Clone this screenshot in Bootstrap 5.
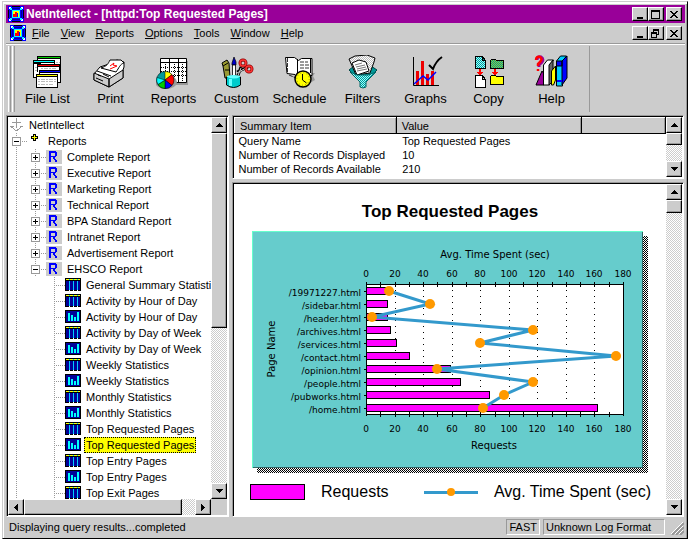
<!DOCTYPE html>
<html lang="en">
<head>
<meta charset="utf-8">
<meta name="viewport" content="width=device-width, initial-scale=1">
<title>NetIntellect - [httpd:Top Requested Pages]</title>
<link href="https://cdn.jsdelivr.net/npm/bootstrap@5.3.0/dist/css/bootstrap.min.css" rel="stylesheet">
<style>
:root{--face:#ccc;--shade:#999}
body{font:11px/16px "Liberation Sans",Arial,sans-serif;color:#000;background:#fff;padding:1px 0 1px 2px}
.app-window{height:calc(100vh - 2px);background:var(--face);border:1px solid var(--face);border-right-color:#000;border-bottom-color:#000;box-shadow:inset 0 2px #fff,inset 1px 0 #fff,inset -1px 0 var(--shade);padding:3px 2px 0 3px}
a{color:#000;text-decoration:none}
svg{display:block;flex:none}
button{padding:0;color:#000}
.title-strip{background:#909;color:#fff;height:18px;padding:0 3px 0 2px}
.title-strip h1{font:bold 12px/18px "Liberation Sans",Arial,sans-serif;margin:0 0 0 2px}
.menu-strip{height:20px;padding:0 3px 0 4px}
.menu-strip .nav{gap:11px;margin-left:6px}
.menu-strip .nav-link{padding:0;color:#000;line-height:18px}
.raised{background:var(--face);border:1px solid;border-color:#fff #000 #000 #fff;border-radius:0;box-shadow:inset -1px -1px var(--shade)}
.win-btn{width:16px;height:14px;display:flex;align-items:center;justify-content:center}
.close-btn{margin-left:2px}
.tool-strip{border-top:1px solid var(--shade);box-shadow:inset 0 1px #fff;height:69px;padding:2px 0 0 2px}
.grip{width:3px;border-left:1px solid #fff;border-right:1px solid var(--shade);margin-right:1px}
.tool-set{border-right:1px solid var(--shade);padding-right:6px}
.tool-btn{width:63px;border:0;background:none;font-size:13px;line-height:16px;padding:4px 0 0}
.tool-btn svg{margin:0 auto 2px}
.sunken{border:1px solid;border-color:var(--shade) #fff #fff var(--shade);background:#fff;box-shadow:inset 1px 1px #000;padding:1px;min-height:0}
.work{gap:3px;padding:3px 1px 0 0}
.tree-pane{width:223px;flex:none}
.summary-pane{height:64px}
.right-side{gap:3px}
.vscroll{width:16px;flex:none}
.vscroll>button,.hscroll>button{width:16px;height:16px;flex:none;display:flex;align-items:center;justify-content:center}
.track{background:repeating-conic-gradient(#fff 0 25%,#ccc 0 50%) 0 0/2px 2px}
.thumb{flex:none}
.tree{list-style:none;margin:0;padding:0;white-space:nowrap}
.tree li{display:flex;height:16px}
.tree a{margin-left:3px;padding:0 2px}
.tree a.picked{background:#ff0;outline:1px dotted #000;outline-offset:-1px}
.tree i{width:19px;flex:none;background-repeat:no-repeat;background-position:8px 0,8px 8px;background-size:1px 16px,11px 1px;padding:4px 0 0 4px}
.v,.t{background-image:repeating-linear-gradient(#999 0 1px,#fff 1px 2px)}
.t{background-image:repeating-linear-gradient(#999 0 1px,#fff 1px 2px),repeating-linear-gradient(90deg,#999 0 1px,#fff 1px 2px)}
.fold{display:block;width:9px;height:9px;border:1px solid var(--shade);background:linear-gradient(#000,#000) center/5px 1px no-repeat #fff}
.fold.plus{background:linear-gradient(#000,#000) center/5px 1px no-repeat,linear-gradient(#000,#000) center/1px 5px no-repeat #fff}
.summary{width:100%;line-height:14px;margin:0;table-layout:fixed}
.summary th{font-weight:400;height:16px;padding:0 5px;background:var(--face);border:1px solid;border-color:#fff #000 #000 #fff;box-shadow:inset -1px 0 var(--shade)}
.summary td{padding:0 4px}
.summary td+td{padding-left:6px}
.chart-title{font:bold 17px/20px "Liberation Sans",Arial,sans-serif;margin:18px 0 8px;text-align:center}
.plot{width:100%;height:auto;font-family:"DejaVu Sans",Verdana,sans-serif}
.legend-row{font-size:16px;line-height:20px;padding:6px 15px 0 16px}
.status-strip{height:21px;padding:2px 1px 3px 3px;gap:3px}
.status-box{border:1px solid;border-color:var(--shade) #fff #fff var(--shade);line-height:14px;padding:0 2px}
.fmt-box{width:122px}
.size-grip{margin-left:3px}
</style>
<script src="https://cdn.jsdelivr.net/npm/bootstrap@5.3.0/dist/js/bootstrap.bundle.min.js"></script>
</head>
<body>
<svg width="0" height="0" class="position-absolute" aria-hidden="true" shape-rendering="crispEdges">
<symbol id="app" viewBox="0 0 16 16"><path d="M0 0h16v16H0z"/><path fill="#00f" d="M0 0h4v1h8V0h4v4h-1v8h1v4h-4v-1H4v1H0v-4h1V4H0z"/><path fill="#009" d="M4 2h8v1H4zM4 13h8v1H4zM2 4h1v8H2zM13 4h1v8h-1z"/><path fill="#fff" d="M1 1h2v1H2v1H1zM13 1h2v2h-1V2h-1zM1 13h1v1h1v1H1zM14 13h1v2h-2v-1h1z"/><path fill="#0ff" d="M2 2h2v2H2zM12 2h2v2h-2zM2 12h2v2H2zM12 12h2v2h-2zM4 4h8v8H4z"/><path fill="#ff0" d="M5 5h6v6H5z"/><path fill="#f00" d="M5 8h2v3H5zM7 6h2v5H7z"/><path fill="#00f" d="M9 7h1v4H9z"/></symbol>
<symbol id="r" viewBox="0 0 16 16"><path fill="#ccc" d="M0 1h16v14H0z"/><path fill="#00f" d="M3 2h7v1h1v4h-1v1H9v2h1v1h1v2H9v-2H8v-1H7V8H5v5H3zM5 4v3h4V4z"/></symbol>
<symbol id="tb" viewBox="0 0 16 16"><path d="M0 1h16v3H0z"/><path fill="#ff0" d="M1 2h14v1H1z"/><path fill="#0cf" d="M4 2h1v1H4zM8 2h1v1H8zM12 2h1v1h-1zM1 4h14v9H1z"/><path fill="#009" d="M1 4h3v9H1zM5 4h3v9H5zM9 4h3v9H9zM13 4h2v9h-2z"/><path d="M0 4h1v9H0zM15 4h1v9h-1zM0 13h4v1H0zM5 13h3v1H5zM9 13h3v1H9zM13 13h3v1h-3z"/></symbol>
<symbol id="ch" viewBox="0 0 16 16"><path d="M0 1h16v13H0z"/><path fill="#009" d="M1 2h14v11H1z"/><path fill="#0ff" d="M3 4h2v8H3zM6 6h2v6H6zM9 8h2v4H9zM12 3h2v9h-2z"/></symbol>
<symbol id="up" viewBox="0 0 7 4"><path d="M3 0h1v1h1v1h1v1h1v1H0V3h1V2h1V1h1z"/></symbol>
<symbol id="dn" viewBox="0 0 7 4"><path d="M0 0h7v1H6v1H5v1H4v1H3V3H2V2H1V1H0z"/></symbol>
<symbol id="lf" viewBox="0 0 4 7"><path d="M4 0v7H3V6H2V5H1V4H0V3h1V2h1V1h1V0z"/></symbol>
<symbol id="rt" viewBox="0 0 4 7"><path d="M0 0v7h1V6h1V5h1V4h1V3H3V2H2V1H1V0z"/></symbol>
<symbol id="mn" viewBox="0 0 10 9"><path d="M2 7h6v2H2z"/></symbol>
<symbol id="mx" viewBox="0 0 10 9"><path fill-rule="evenodd" d="M0 0h9v9H0zM1 2v6h7V2z"/></symbol>
<symbol id="rs" viewBox="0 0 10 9"><path fill-rule="evenodd" d="M2 0h6v6H6v3H0V3h2zM3 2v1h3v2h1V2zM1 5v3h4V5z"/></symbol>
<symbol id="cl" viewBox="0 0 10 9"><path d="M1 1h2v1h1v1h2V2h1V1h2v1H8v1H7v1H6v1h1v1h1v1h1v1H7V7H6V6H4v1H3v1H1V7h1V6h1V5h1V4H3V3H2V2H1z"/></symbol>
<pattern id="chk" width="2" height="2" patternUnits="userSpaceOnUse"><path fill="#fff" d="M0 0h2v2H0z"/><path d="M0 0h1v1H0zM1 1h1v1H1z"/></pattern>
<pattern id="tealchk" width="2" height="2" patternUnits="userSpaceOnUse"><path fill="#9ff" d="M0 0h2v2H0z"/><path fill="#099" d="M0 0h1v1H0zM1 1h1v1H1z"/></pattern>
<pattern id="olivechk" width="2" height="2" patternUnits="userSpaceOnUse"><path fill="#9c3" d="M0 0h2v2H0z"/><path fill="#099" d="M0 0h1v1H0zM1 1h1v1H1z"/></pattern>
<pattern id="greychk" width="2" height="2" patternUnits="userSpaceOnUse"><path fill="#fff" d="M0 0h2v2H0z"/><path fill="#bbb" d="M0 0h1v1H0zM1 1h1v1H1z"/></pattern>
</svg>

<div class="app-window d-flex flex-column overflow-hidden">
<header>
<div class="title-strip d-flex align-items-center">
<svg width="16" height="16"><use href="#app"/></svg>
<h1 class="flex-grow-1 text-truncate">NetIntellect - [httpd:Top Requested Pages]</h1>
<button class="raised win-btn" aria-label="Minimize"><svg width="10" height="9"><use href="#mn"/></svg></button>
<button class="raised win-btn" aria-label="Maximize"><svg width="10" height="9"><use href="#mx"/></svg></button>
<button class="raised win-btn close-btn" aria-label="Close"><svg width="10" height="9"><use href="#cl"/></svg></button>
</div>
<nav class="menu-strip d-flex align-items-center" aria-label="Menu">
<svg width="16" height="16"><use href="#app"/></svg>
<div class="nav flex-grow-1 flex-nowrap"><a class="nav-link" href="#"><u>F</u>ile</a><a class="nav-link" href="#"><u>V</u>iew</a><a class="nav-link" href="#"><u>R</u>eports</a><a class="nav-link" href="#"><u>O</u>ptions</a><a class="nav-link" href="#"><u>T</u>ools</a><a class="nav-link" href="#"><u>W</u>indow</a><a class="nav-link" href="#"><u>H</u>elp</a></div>
<button class="raised win-btn" aria-label="Minimize document"><svg width="10" height="9"><use href="#mn"/></svg></button>
<button class="raised win-btn" aria-label="Restore document"><svg width="10" height="9"><use href="#rs"/></svg></button>
<button class="raised win-btn close-btn" aria-label="Close document"><svg width="10" height="9"><use href="#cl"/></svg></button>
</nav>
<div class="tool-strip d-flex">
<div class="grip"></div><div class="grip"></div>
<div class="tool-set d-flex" role="toolbar">
<button class="tool-btn"><svg width="35" height="34" viewBox="30 55 35 34" shape-rendering="crispEdges"><path d="M37 56h24v14H37z"/><path fill="#fff" d="M38 59h22v10H38z"/><path fill="#0c0" d="M38 57h22v1H38z"/><path d="M33 60h22v10H33z"/><path fill="#fff" d="M34 63h20v6H34z"/><path fill="#0ff" d="M34 61h20v1H34z"/><path fill="#fff" stroke="#000" d="M33.500 63v14.500H40V63z"/><path d="M37 64h23v8H37z"/><path fill="#fff" d="M38 67h21v5H38z"/><path fill="#f00" d="M38 65h21v1H38z"/><path d="M39 70h22v13H39z"/><path fill="#fff" d="M40 73h20v9H40z"/><path fill="#00f" d="M40 71h20v1H40z"/><path d="M36 74h22v14H36z"/><path fill="#fff" d="M37 77h20v10H37z"/><path fill="#ff0" d="M37 75h20v1H37z"/><path stroke="#bbb" stroke-dasharray="2 1 4 1" d="M38 79.500h18M38 81.500h18M38 84.500h15M35 67.500h2M35 70.500h2M56 62.500h4M41 68.500h16"/></svg>File List</button>
<button class="tool-btn"><svg width="35" height="34" viewBox="93 55 35 34"><path fill="#fff" stroke="#000" d="M94 74l6-7 9-3 8-4 7 2v5l-1 3v8l-14 9-15-7z"/><path fill="#ccc" stroke="#000" d="M94 73l15 6v8l-15-7zM109 79l14-9v8l-14 9z"/><path fill="#fff" stroke="#000" d="M101 68c6-2 7-4 9-8h11l3 3c-4 1-5 5-8 9z"/><path fill="none" stroke="#f00" d="M110 66l4-3-1 2 4 1-7 3"/><path fill="none" stroke="#000" d="M97 71l14 5M98 75l3 1M103 74l6 3M96 78l7 3"/></svg>Print</button>
<button class="tool-btn"><svg width="35" height="34" viewBox="156 55 35 34"><path fill="#999" d="M162 61h26v24h-26z"/><path fill="#fff" stroke="#000" d="M160.500 58.500h26v24h-26z"/><path d="M160.500 62.500h26M169.500 58v24M178.500 58v24" stroke="#000"/><path d="M161 67.500h25M161 71.500h25M161 75.500h25M165.500 64v18M174.500 64v18M182.500 64v18" stroke="#000" stroke-dasharray="1 1"/><ellipse cx="166" cy="82" rx="11" ry="7" fill="#999"/><g stroke="#000" stroke-width=".5"><circle cx="165" cy="80" r="8.500" fill="#099"/><path fill="#ff0" d="M165 80v-8.500a8.500 8.500 0 0 1 7 3z"/><path fill="#f00" d="M165 80l7-5.500a8.500 8.500 0 0 1 0 11z"/><path fill="#00f" d="M165 80l7 5.500a8.500 8.500 0 0 1-7 3z"/><path fill="#0c0" d="M165 80v8.500a8.500 8.500 0 0 1-7-4z"/><path fill="#0ff" d="M165 80l-7 4.500a8.500 8.500 0 0 1-1-7z"/></g></svg>Reports</button>
<button class="tool-btn"><svg width="35" height="34" viewBox="219 55 35 34"><path fill="#999933" stroke="#000" d="M222 63l5-3 2 3 1 15h-5l-2-12z"/><path stroke="#000" d="M223 66l5-3M225 70h4"/><path fill="#00c" stroke="#000" stroke-width=".7" d="M232 63l2-6 2 5v3h-4z"/><path fill="#fff" stroke="#000" stroke-width=".8" d="M232.500 65h3v12h-3z"/><path stroke="#000" stroke-width="3" d="M248 67l-11 5M241 67l-4 11"/><path stroke="#ccc" stroke-width="1" d="M246 68l-9 5M241 68l-4 10"/><g fill="none" stroke="#800" stroke-width="3"><circle cx="243" cy="63" r="3"/><circle cx="249" cy="69" r="3"/></g><g fill="none" stroke="#f33" stroke-width="1.500"><circle cx="243" cy="63" r="3"/><circle cx="249" cy="69" r="3"/></g><path fill="#0cc" stroke="#000" d="M226.500 77q7-3 14 0v8q-7 5-14 0z"/><path fill="#6ff" d="M227 77q7 3 13 0v-1q-7-2-13 0zM229 79h3v7h-3z"/></svg>Custom</button>
<button class="tool-btn"><svg width="35" height="34" viewBox="282 55 35 34"><path fill="#999" d="M306 73h9l-2 3 2 4-7 4z"/><path fill="#fff" stroke="#000" d="M285.500 57.500h9l4 3 3-2h10.500v17h-11l-3 2-3-3-8-1z"/><path stroke="#000" d="M297.500 59v17M310.500 59v14"/><path stroke="#000" stroke-width=".8" d="M287.500 58v15M300 62h8M300 65h9M300 68h9M289 75l7 3" stroke-dasharray="4 1"/><circle cx="303" cy="79" r="8" fill="#ff0" stroke="#000" stroke-width="1.500"/><circle cx="303" cy="79" r="6.200" fill="none" stroke="#990" stroke-dasharray="1 2.200"/><path fill="none" stroke="#000" d="M302.500 74v6l4 3"/></svg>Schedule</button>
<button class="tool-btn"><svg width="35" height="34" viewBox="345 55 35 34"><path fill="#099" stroke="#044" d="M349 70l5-4h17l6 4-5 5-9 4-9-4z"/><path fill="url(#greychk)" stroke="#000" d="M349 59l6-3 12-1 8 3-1 4-4 11-14 2z"/><path fill="#fff" stroke="#000" d="M352 63l7-3 7 2 3 9-12 4z"/><path stroke="#555" stroke-width=".8" d="M355 65l7-2M356 67l9-2M357 69l9-2M357 71l10-2"/><path fill="url(#tealchk)" stroke="#066" d="M350 72l7 3h11l8-3-10 10v5l-3 1-3-1v-5z"/></svg>Filters</button>
<button class="tool-btn"><svg width="35" height="34" viewBox="408 55 35 34"><path fill="#e00" d="M416 71h3v14h-3zM421 61h3v24h-3zM426 74h3v11h-3zM431 71h3v14h-3z"/><path fill="none" stroke="#000" d="M413.500 57v28.500H439"/><path fill="none" stroke="#00f" stroke-width="1.500" d="M414 84l9-8 5 4 8-8"/><path fill="none" stroke="#000" stroke-width="2" d="M429 65l4 4q3-8 9-12"/></svg>Graphs</button>
<button class="tool-btn"><svg width="35" height="34" viewBox="471 55 35 34" shape-rendering="crispEdges"><path fill="url(#tealchk)" stroke="#000" d="M475.500 56.500h7l3 4v8h-10z"/><path fill="#fff" stroke="#000" d="M475.500 75.500h7l3 4v8h-10zM482.500 75.500v4h3"/><path stroke="#000" fill="none" d="M482.500 56.500v4h3"/><path fill="url(#olivechk)" stroke="#000" d="M490.500 60.500l1-1h4l1 1h7v8h-13z"/><path fill="#ff0" stroke="#000" d="M490.500 76.500l1-1h4l1 1h7v8h-13z"/><path fill="#f00" d="M479 69h2v3h3l-4 3-4-3h3zM494 69h2v3h3l-4 3-4-3h3z"/></svg>Copy</button>
<button class="tool-btn"><svg width="35" height="34" viewBox="534 55 35 34"><path fill="none" stroke="#909" stroke-width="3" d="M537 60q0-4 4-3 3 2 1 5l-3 3v2"/><path fill="none" stroke="#f00" stroke-width="2.500" d="M536 60q0-4 4-3 3 2 0 5l-2 2v2M538 69v2"/><path fill="#909" stroke="#000" d="M536 85l6-14 2 3v11z"/><path fill="#fff" stroke="#000" d="M543.500 65l4-5h6l-4 5v20h-6z"/><path fill="#666" stroke="#000" d="M549 65l4-5v21l-4 4z"/><path fill="#ff0" stroke="#000" d="M551.500 71l4-5v14l-2 5h-2z"/><path fill="#0cf" stroke="#000" d="M556.500 61l4-5h6l-4 5v25h-6z"/><path fill="#00f" stroke="#000" d="M562 61l5-5v22l-5 7zM556.500 61h5.500v5h-5.500z"/><path stroke="#00f" stroke-width="2" d="M557 81h5"/></svg>Help</button>
</div>
</div>
</header>

<main class="work d-flex flex-grow-1 overflow-hidden">
<section class="sunken tree-pane d-flex flex-column" aria-label="Reports">
<div class="d-flex flex-grow-1 overflow-hidden">
<ul class="tree flex-grow-1 overflow-hidden">
<li><svg width="16" height="16" fill="none" stroke="#999" shape-rendering="crispEdges"><path d="M8.500 1v10M4 5.500h9M8.500 14l-6-5h3M8.500 14l6-5h-3"/></svg><a href="#">NetIntellect</a></li>
<li><i class="t"><button class="fold" aria-label="Collapse"></button></i><svg width="16" height="16" shape-rendering="crispEdges"><path d="M6 1h3v2h2v3H9v2H6V6H4V3h2z"/><path fill="#ff0" d="M7 2h1v2h2v1H8v2H7V5H5V4h2z"/></svg><a href="#">Reports</a></li>
<li><i class="v"></i><i class="t"><button class="fold plus" aria-label="Expand"></button></i><svg width="16" height="16"><use href="#r"/></svg><a href="#">Complete Report</a></li>
<li><i class="v"></i><i class="t"><button class="fold plus" aria-label="Expand"></button></i><svg width="16" height="16"><use href="#r"/></svg><a href="#">Executive Report</a></li>
<li><i class="v"></i><i class="t"><button class="fold plus" aria-label="Expand"></button></i><svg width="16" height="16"><use href="#r"/></svg><a href="#">Marketing Report</a></li>
<li><i class="v"></i><i class="t"><button class="fold plus" aria-label="Expand"></button></i><svg width="16" height="16"><use href="#r"/></svg><a href="#">Technical Report</a></li>
<li><i class="v"></i><i class="t"><button class="fold plus" aria-label="Expand"></button></i><svg width="16" height="16"><use href="#r"/></svg><a href="#">BPA Standard Report</a></li>
<li><i class="v"></i><i class="t"><button class="fold plus" aria-label="Expand"></button></i><svg width="16" height="16"><use href="#r"/></svg><a href="#">Intranet Report</a></li>
<li><i class="v"></i><i class="t"><button class="fold plus" aria-label="Expand"></button></i><svg width="16" height="16"><use href="#r"/></svg><a href="#">Advertisement Report</a></li>
<li><i class="v"></i><i class="t"><button class="fold" aria-label="Collapse"></button></i><svg width="16" height="16"><use href="#r"/></svg><a href="#">EHSCO Report</a></li>
<li><i class="v"></i><i></i><i class="t"></i><svg width="16" height="16"><use href="#tb"/></svg><a href="#">General Summary Statistics</a></li>
<li><i class="v"></i><i></i><i class="t"></i><svg width="16" height="16"><use href="#tb"/></svg><a href="#">Activity by Hour of Day</a></li>
<li><i class="v"></i><i></i><i class="t"></i><svg width="16" height="16"><use href="#ch"/></svg><a href="#">Activity by Hour of Day</a></li>
<li><i class="v"></i><i></i><i class="t"></i><svg width="16" height="16"><use href="#tb"/></svg><a href="#">Activity by Day of Week</a></li>
<li><i class="v"></i><i></i><i class="t"></i><svg width="16" height="16"><use href="#ch"/></svg><a href="#">Activity by Day of Week</a></li>
<li><i class="v"></i><i></i><i class="t"></i><svg width="16" height="16"><use href="#tb"/></svg><a href="#">Weekly Statistics</a></li>
<li><i class="v"></i><i></i><i class="t"></i><svg width="16" height="16"><use href="#ch"/></svg><a href="#">Weekly Statistics</a></li>
<li><i class="v"></i><i></i><i class="t"></i><svg width="16" height="16"><use href="#tb"/></svg><a href="#">Monthly Statistics</a></li>
<li><i class="v"></i><i></i><i class="t"></i><svg width="16" height="16"><use href="#ch"/></svg><a href="#">Monthly Statistics</a></li>
<li><i class="v"></i><i></i><i class="t"></i><svg width="16" height="16"><use href="#tb"/></svg><a href="#">Top Requested Pages</a></li>
<li><i class="v"></i><i></i><i class="t"></i><svg width="16" height="16"><use href="#ch"/></svg><a class="picked" href="#" aria-current="true">Top Requested Pages</a></li>
<li><i class="v"></i><i></i><i class="t"></i><svg width="16" height="16"><use href="#tb"/></svg><a href="#">Top Entry Pages</a></li>
<li><i class="v"></i><i></i><i class="t"></i><svg width="16" height="16"><use href="#ch"/></svg><a href="#">Top Entry Pages</a></li>
<li><i class="v"></i><i></i><i class="t"></i><svg width="16" height="16"><use href="#tb"/></svg><a href="#">Top Exit Pages</a></li>
</ul>
<div class="vscroll track d-flex flex-column">
<button class="raised" aria-label="Scroll up"><svg width="7" height="4"><use href="#up"/></svg></button>
<div class="raised thumb" style="height:51%"></div>
<button class="raised mt-auto" aria-label="Scroll down"><svg width="7" height="4"><use href="#dn"/></svg></button>
</div>
</div>
<div class="d-flex" style="background:#ccc">
<div class="hscroll track d-flex flex-grow-1">
<button class="raised" aria-label="Scroll left"><svg width="4" height="7"><use href="#lf"/></svg></button>
<div class="raised thumb" style="width:78%"></div>
<button class="raised ms-auto" aria-label="Scroll right"><svg width="4" height="7"><use href="#rt"/></svg></button>
</div>
<div class="vscroll"></div>
</div>
</section>

<div class="right-side d-flex flex-column flex-grow-1 overflow-hidden">
<section class="sunken summary-pane d-flex flex-shrink-0" aria-label="Summary">
<div class="flex-grow-1 overflow-hidden">
<table class="summary">
<colgroup><col style="width:37.5%"><col style="width:43%"><col></colgroup>
<thead><tr><th scope="col">Summary Item</th><th scope="col">Value</th><th></th></tr></thead>
<tbody><tr><td>Query Name</td><td colspan="2">Top Requested Pages</td></tr><tr><td>Number of Records Displayed</td><td colspan="2">10</td></tr><tr><td>Number of Records Available</td><td colspan="2">210</td></tr></tbody>
</table>
</div>
<div class="vscroll track d-flex flex-column">
<button class="raised" aria-label="Scroll up"><svg width="7" height="4"><use href="#up"/></svg></button>
<div class="raised thumb" style="height:20%"></div>
<button class="raised mt-auto" aria-label="Scroll down"><svg width="7" height="4"><use href="#dn"/></svg></button>
</div>
</section>
<section class="sunken d-flex flex-grow-1 overflow-hidden" aria-label="Chart">
<div class="flex-grow-1 overflow-hidden">
<h2 class="chart-title">Top Requested Pages</h2>
<svg class="plot" viewBox="234 230 432 246" role="img" aria-label="Requests and average time spent per page">
<g shape-rendering="crispEdges">
<path fill="url(#chk)" d="M257 236h391v237H257z"/>
<path fill="#6cc" d="M252 231h391v237H252z"/>
<path fill="none" stroke="#6fc" d="M252.500 468V231.500H643"/><path fill="none" stroke="#366" d="M253 467.500h389.500V232"/>
<path fill="#fff" d="M366 284h257v130H366z"/>
<path stroke="#000" stroke-dasharray="1 5" d="M395.500 290v124M423.500 290v124M452.500 290v124M480.500 290v124M509.500 290v124M537.500 290v124M566.500 290v124M594.500 290v124"/>
<g fill="#f0f" stroke="#000"><path d="M366.500 287.500h22v7h-22zM366.500 300.500h21v7h-21zM366.500 313.500h21v7h-21zM366.500 326.500h24v7h-24zM366.500 339.500h30v7h-30zM366.500 352.500h43v7h-43zM366.500 365.500h84v7h-84zM366.500 378.500h94v7h-94zM366.500 391.500h123v7h-123zM366.500 404.500h231v7h-231z"/></g>
<path fill="none" stroke="#000" d="M366.500 282v134M623.500 282v134M366 284.500h258M366 414.500h258M364 291.500h2M364 304.500h2M364 317.500h2M364 330.500h2M364 343.500h2M364 356.500h2M364 369.500h2M364 382.500h2M364 395.500h2M364 408.500h2"/>
<path stroke="#000" d="M380.500 282v5M395.500 282v5M409.500 282v5M423.500 282v5M437.500 282v5M452.500 282v5M466.500 282v5M480.500 282v5M495.500 282v5M509.500 282v5M523.500 282v5M537.500 282v5M552.500 282v5M566.500 282v5M580.500 282v5M594.500 282v5M609.500 282v5M380.500 412v5M395.500 412v5M409.500 412v5M423.500 412v5M437.500 412v5M452.500 412v5M466.500 412v5M480.500 412v5M495.500 412v5M509.500 412v5M523.500 412v5M537.500 412v5M552.500 412v5M566.500 412v5M580.500 412v5M594.500 412v5M609.500 412v5"/>
</g>
<path fill="none" stroke="#39c" stroke-width="3" d="M389 291L430 304 372 317 533 330 480 343 616 356 437 369 533 382 504 395 483 408"/>
<g fill="#f90"><circle cx="389" cy="291" r="5"/><circle cx="430" cy="304" r="5"/><circle cx="372" cy="317" r="5"/><circle cx="533" cy="330" r="5"/><circle cx="480" cy="343" r="5"/><circle cx="616" cy="356" r="5"/><circle cx="437" cy="369" r="5"/><circle cx="533" cy="382" r="5"/><circle cx="504" cy="395" r="5"/><circle cx="483" cy="408" r="5"/></g>
<g font-size="10" text-anchor="middle"><text x="495" y="258">Avg. Time Spent (sec)</text><text x="494" y="449">Requests</text><text transform="translate(275 349) rotate(-90)">Page Name</text></g>
<g font-size="9" text-anchor="middle"><text x="366" y="277">0</text><text x="395" y="277">20</text><text x="423" y="277">40</text><text x="452" y="277">60</text><text x="480" y="277">80</text><text x="509" y="277">100</text><text x="537" y="277">120</text><text x="566" y="277">140</text><text x="594" y="277">160</text><text x="623" y="277">180</text>
<text x="366" y="432">0</text><text x="395" y="432">20</text><text x="423" y="432">40</text><text x="452" y="432">60</text><text x="480" y="432">80</text><text x="509" y="432">100</text><text x="537" y="432">120</text><text x="566" y="432">140</text><text x="594" y="432">160</text><text x="623" y="432">180</text></g>
<g font-size="9" text-anchor="end"><text x="361" y="296">/19971227.html</text><text x="361" y="309">/sidebar.html</text><text x="361" y="322">/header.html</text><text x="361" y="335">/archives.html</text><text x="361" y="348">/services.html</text><text x="361" y="361">/contact.html</text><text x="361" y="374">/opinion.html</text><text x="361" y="387">/people.html</text><text x="361" y="400">/pubworks.html</text><text x="361" y="413">/home.html</text></g>
</svg>
<div class="legend-row d-flex align-items-center justify-content-between">
<span class="d-flex align-items-center gap-3"><svg width="55" height="16" shape-rendering="crispEdges"><path fill="#f0f" stroke="#000" d="M.5.5h54v15H.5z"/></svg>Requests</span>
<span class="d-flex align-items-center gap-3"><svg width="54" height="10"><path fill="#39c" d="M0 4h54v3H0z"/><circle cx="27" cy="5" r="4" fill="#f90"/></svg>Avg. Time Spent (sec)</span>
</div>
</div>
<div class="vscroll track d-flex flex-column">
<button class="raised" aria-label="Scroll up"><svg width="7" height="4"><use href="#up"/></svg></button>
<div class="raised thumb" style="height:4%"></div>
<button class="raised mt-auto" aria-label="Scroll down"><svg width="7" height="4"><use href="#dn"/></svg></button>
</div>
</section>
</div>
</main>
<footer class="status-strip d-flex">
<span class="flex-grow-1">Displaying query results...completed</span>
<span class="status-box">FAST</span><span class="status-box fmt-box">Unknown Log Format</span>
<svg class="size-grip align-self-end" width="13" height="13"><path stroke="#999" stroke-width="2" d="M1 13L13 1M5 13l8-8M9 13l4-4"/><path stroke="#fff" d="M0 12L12 0M4 12l8-8M8 12l4-4"/></svg>
</footer>
</div>
</body>
</html>
